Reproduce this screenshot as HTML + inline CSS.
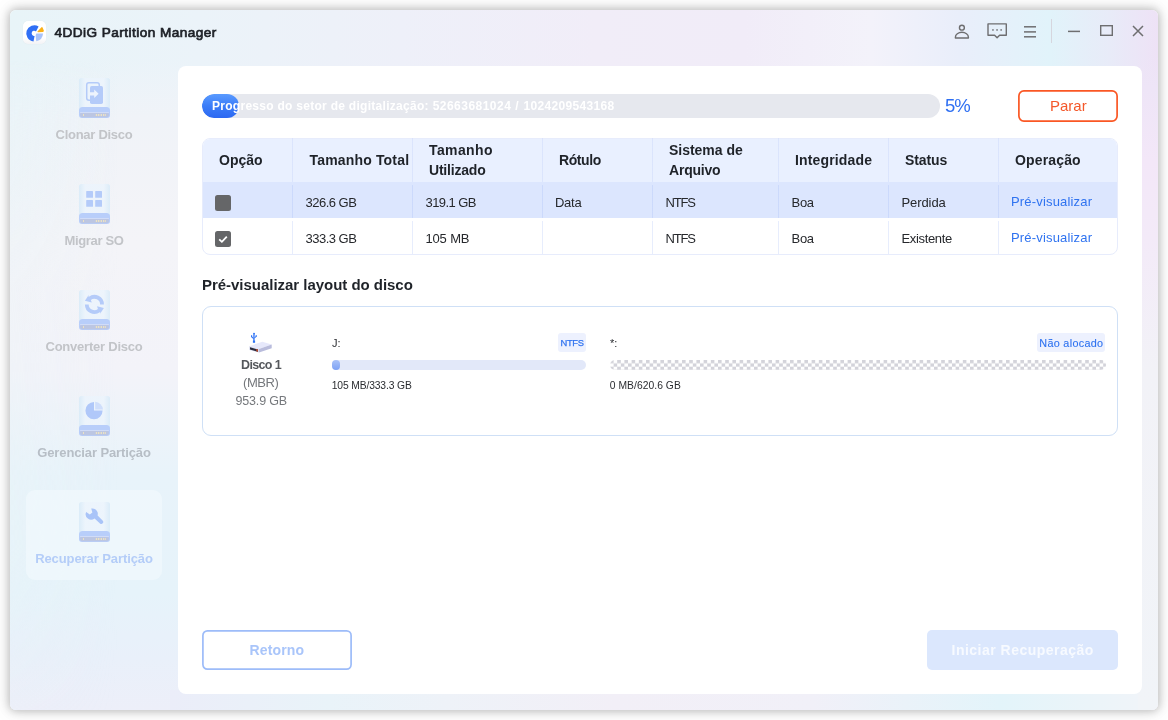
<!DOCTYPE html>
<html lang="pt">
<head>
<meta charset="utf-8">
<title>4DDiG Partition Manager</title>
<style>
*{box-sizing:border-box;margin:0;padding:0}
html,body{width:1168px;height:720px;overflow:hidden;background:#fff}
body{font-family:"Liberation Sans",sans-serif;position:relative;color:#1f2329;will-change:transform}
#win{position:absolute;left:10px;top:10px;width:1148px;height:700px;border-radius:6px;overflow:hidden;
 background:linear-gradient(90deg,#e8f4f8 0%,#ebf3f9 16.5%,#eef0f9 34%,#f1edf8 51%,#f1ecf8 64%,#f3f2fa 75%,#e9eefa 82.7%,#e1f3fa 90.6%,#e8ebf8 95.8%,#eee2f6 100%);
 box-shadow:0 0 10px 1px rgba(0,0,0,.26),0 0 20px 4px rgba(0,0,0,.05)}
#bgl{position:absolute;left:0;top:50px;width:176px;height:650px;
 background:linear-gradient(180deg,rgba(241,243,248,0) 0%,#f0f3f8 9%,#f4f4f8 28%,#f3f3f9 48%,#e8f3fa 64%,#e6f3fa 82%,#e9f0fa 92%,#edeff9 100%)}
#bgl2{position:absolute;left:0;top:50px;width:110px;height:650px;background:linear-gradient(90deg,rgba(232,244,248,.7),rgba(232,244,248,0));
 -webkit-mask-image:linear-gradient(180deg,transparent 0,#000 6%,rgba(0,0,0,.8) 16%,rgba(0,0,0,.35) 35%,rgba(0,0,0,.4) 55%,rgba(0,0,0,.5) 75%,rgba(0,0,0,.1) 100%);mask-image:linear-gradient(180deg,transparent 0,#000 6%,rgba(0,0,0,.8) 16%,rgba(0,0,0,.35) 35%,rgba(0,0,0,.4) 55%,rgba(0,0,0,.5) 75%,rgba(0,0,0,.1) 100%)}
#bgb{position:absolute;left:160px;top:680px;width:988px;height:20px;
 background:linear-gradient(90deg,#ebedf9 0%,#e9f3f9 16%,#eef2f8 28%,#f2eff7 45%,#f1f0f8 65%,#e3f4fa 84%,#ebf4f9 93%,#f1f4f9 100%)}
#bgr{position:absolute;left:1128px;top:46px;width:20px;height:654px;
 background:linear-gradient(180deg,rgba(237,228,247,0) 0%,#eee5f7 5%,#f3e7f8 16%,#f3eaf8 28%,#f2f2f7 48%,#f1f4f8 100%)}
#panel{position:absolute;left:178px;top:66px;width:964px;height:628px;background:#fff;border-radius:8px}
.t{position:absolute;white-space:nowrap;line-height:20px;height:20px}
.b{font-weight:bold}
svg{position:absolute;overflow:visible}
/* title */
#logo{position:absolute;left:23px;top:21px;width:23px;height:23px;border-radius:5px;background:linear-gradient(180deg,#fff 70%,#f3f3f5 100%);box-shadow:0 0 1px rgba(0,0,0,.10)}
/* sidebar */
.sb{position:absolute;left:14px;width:160px;text-align:center;font-weight:bold;font-size:13px;color:#c2c4c8;line-height:20px;height:20px;white-space:nowrap}
#sel{position:absolute;left:26px;top:490px;width:136px;height:90px;border-radius:9px;background:rgba(244,250,254,.6)}
/* table */
#tbl{position:absolute;left:202px;top:138px;width:916px;height:117px;border:1px solid #e7ecfc;border-radius:8px;overflow:hidden;background:#fff}
#thead{position:absolute;left:-1px;top:-1px;width:916px;height:44px;background:#e9f0ff}
#row1{position:absolute;left:-1px;top:43px;width:916px;height:36px;background:#dce6fe}
.vl{position:absolute;top:138px;width:1px;height:116px;background:linear-gradient(180deg,rgba(205,217,250,.5) 0,rgba(205,217,250,.5) 44px,transparent 44px,transparent 47px,rgba(190,207,250,.55) 47px,rgba(190,207,250,.55) 80px,transparent 80px,transparent 83px,rgba(215,225,251,.6) 83px,rgba(215,225,251,.6) 116px)}
.th{position:absolute;font-weight:bold;font-size:14px;color:#1f2329;line-height:20px;white-space:nowrap}
.td{position:absolute;font-size:13px;color:#26282c;line-height:20px;height:20px;white-space:nowrap}
.lnk{color:#2f73f0}
.cb{position:absolute;left:215px;width:16px;height:16px;border-radius:2.5px;background:#656668}
/* spacing */
#nao{letter-spacing:0.315px}
#p4{letter-spacing:0.333px}
#p2{letter-spacing:0.471px}
#p1{letter-spacing:0.280px}
#title{letter-spacing:0.454px}
#s1{letter-spacing:-0.282px}
#s2{letter-spacing:-0.325px}
#s3{letter-spacing:-0.228px}
#s4{letter-spacing:-0.113px}
#s5{letter-spacing:-0.085px}
#pct{letter-spacing:-1.123px}
#parar{letter-spacing:0.000px}
#h1{letter-spacing:0.006px}
#h2{letter-spacing:0.170px}
#h3a{letter-spacing:0.387px}
#h3b{letter-spacing:-0.205px}
#h4{letter-spacing:-0.421px}
#h5a{letter-spacing:-0.023px}
#h5b{letter-spacing:-0.214px}
#h6{letter-spacing:0.149px}
#h7{letter-spacing:-0.115px}
#h8{letter-spacing:0.151px}
#r1c2{letter-spacing:-0.517px}
#r1c3{letter-spacing:-0.580px}
#r1c4{letter-spacing:-0.267px}
#r1c5{letter-spacing:-1.214px}
#r1c6{letter-spacing:-0.280px}
#r1c7{letter-spacing:-0.087px}
#r1c8{letter-spacing:0.175px}
#r2c2{letter-spacing:-0.517px}
#r2c3{letter-spacing:-0.169px}
#r2c5{letter-spacing:-1.200px}
#r2c6{letter-spacing:-0.280px}
#r2c7{letter-spacing:-0.343px}
#r2c8{letter-spacing:0.175px}
#pvh{letter-spacing:-0.031px}
#d1{letter-spacing:-0.638px}
#d2{letter-spacing:-0.449px}
#d3{letter-spacing:-0.166px}
#j2{letter-spacing:-0.124px}
#u2{letter-spacing:0.046px}
#ntfs{letter-spacing:-0.346px}
#ret{letter-spacing:0.133px}
#ini{letter-spacing:0.491px}
</style>
</head>
<body>
<div id="win"><div id="bgl"></div><div id="bgl2"></div><div id="bgb"></div><div id="bgr"></div></div>
<div id="logo"></div>
<div id="title" class="t" style="left:54.5px;top:22.8px;font-size:13.6px;color:#1d2026;-webkit-text-stroke:.7px #1d2026">4DDiG Partition Manager</div>

<div id="sel"></div>
<div id="s1" class="sb" style="top:124.8px">Clonar Disco</div>
<div id="s2" class="sb" style="top:230.8px">Migrar SO</div>
<div id="s3" class="sb" style="top:336.8px">Converter Disco</div>
<div id="s4" class="sb" style="top:442.8px;color:#b7bec6">Gerenciar Partição</div>
<div id="s5" class="sb" style="top:548.8px;color:#b4cdf8">Recuperar Partição</div>

<svg style="left:79px;top:78px" width="31" height="40" viewBox="0 0 31 40">
<defs><linearGradient id="gb78" x1="0" x2="1" y1="0" y2="0"><stop offset="0" stop-color="#d9ebf8"/><stop offset=".2" stop-color="#ecf4fc"/><stop offset=".8" stop-color="#ecf4fc"/><stop offset="1" stop-color="#d9ebf8"/></linearGradient></defs>
<path d="M2.5 0 H28.5 Q31 0 31 2.5 V34 H0 V2.5 Q0 0 2.5 0Z" fill="url(#gb78)" opacity=".9"/>
<path d="M3.5 29 H27.5 Q31 29 31 32.5 V37 Q31 40 28 40 H3 Q0 40 0 37 V32.5 Q0 29 3.5 29Z" fill="#b8cefa"/>
<rect x="1" y="34.3" width="29" height="5" rx="2.3" fill="#bcc6e2"/>
<rect x="1" y="34" width="29" height="1" rx=".5" fill="#d3defa" opacity=".9"/>
<g fill="#ebe2c4"><rect x="4" y="36" width="1" height="2"/><rect x="16.8" y="36" width="1.4" height="2"/><rect x="19" y="36" width="1.4" height="2"/><rect x="21.6" y="36" width="1.4" height="2"/><rect x="24" y="36" width="1.2" height="2"/><rect x="25.8" y="36" width="1" height="2"/></g>
<rect x="7.7" y="4.7" width="12.6" height="17.6" rx="2.2" fill="none" stroke="#b4cbf9" stroke-width="1.5"/>
<rect x="11" y="8" width="13" height="18" rx="1.8" fill="#b4cbf9"/>
<path d="M10 14.2 H15.2 V11.6 L19.6 15.8 L15.2 20 V17.4 H10Z" fill="#eef4fd"/>
</svg><svg style="left:79px;top:184px" width="31" height="40" viewBox="0 0 31 40">
<defs><linearGradient id="gb184" x1="0" x2="1" y1="0" y2="0"><stop offset="0" stop-color="#d9ebf8"/><stop offset=".2" stop-color="#ecf4fc"/><stop offset=".8" stop-color="#ecf4fc"/><stop offset="1" stop-color="#d9ebf8"/></linearGradient></defs>
<path d="M2.5 0 H28.5 Q31 0 31 2.5 V34 H0 V2.5 Q0 0 2.5 0Z" fill="url(#gb184)" opacity=".9"/>
<path d="M3.5 29 H27.5 Q31 29 31 32.5 V37 Q31 40 28 40 H3 Q0 40 0 37 V32.5 Q0 29 3.5 29Z" fill="#b8cefa"/>
<rect x="1" y="34.3" width="29" height="5" rx="2.3" fill="#bcc6e2"/>
<rect x="1" y="34" width="29" height="1" rx=".5" fill="#d3defa" opacity=".9"/>
<g fill="#ebe2c4"><rect x="4" y="36" width="1" height="2"/><rect x="16.8" y="36" width="1.4" height="2"/><rect x="19" y="36" width="1.4" height="2"/><rect x="21.6" y="36" width="1.4" height="2"/><rect x="24" y="36" width="1.2" height="2"/><rect x="25.8" y="36" width="1" height="2"/></g>
<g fill="#b4cbf9"><rect x="7.2" y="7" width="6.8" height="6.8" rx=".6"/><rect x="16.2" y="7" width="6.8" height="6.8" rx=".6"/><rect x="7.2" y="16" width="6.8" height="6.8" rx=".6"/><rect x="16.2" y="16" width="6.8" height="6.8" rx=".6"/></g>
</svg><svg style="left:79px;top:290px" width="31" height="40" viewBox="0 0 31 40">
<defs><linearGradient id="gb290" x1="0" x2="1" y1="0" y2="0"><stop offset="0" stop-color="#d9ebf8"/><stop offset=".2" stop-color="#ecf4fc"/><stop offset=".8" stop-color="#ecf4fc"/><stop offset="1" stop-color="#d9ebf8"/></linearGradient></defs>
<path d="M2.5 0 H28.5 Q31 0 31 2.5 V34 H0 V2.5 Q0 0 2.5 0Z" fill="url(#gb290)" opacity=".9"/>
<path d="M3.5 29 H27.5 Q31 29 31 32.5 V37 Q31 40 28 40 H3 Q0 40 0 37 V32.5 Q0 29 3.5 29Z" fill="#b8cefa"/>
<rect x="1" y="34.3" width="29" height="5" rx="2.3" fill="#bcc6e2"/>
<rect x="1" y="34" width="29" height="1" rx=".5" fill="#d3defa" opacity=".9"/>
<g fill="#ebe2c4"><rect x="4" y="36" width="1" height="2"/><rect x="16.8" y="36" width="1.4" height="2"/><rect x="19" y="36" width="1.4" height="2"/><rect x="21.6" y="36" width="1.4" height="2"/><rect x="24" y="36" width="1.2" height="2"/><rect x="25.8" y="36" width="1" height="2"/></g>
<g fill="#b4cbf9"><path d="M24.9 14.4 A9.5 9.5 0 0 0 9.55 6.91 L9.7 5 L5.9 10.7 L12.75 12.6 L11.89 9.91 A5.7 5.7 0 0 1 21.1 14.4 Z"/><path d="M24.9 14.4 A9.5 9.5 0 0 0 9.55 6.91 L9.7 5 L5.9 10.7 L12.75 12.6 L11.89 9.91 A5.7 5.7 0 0 1 21.1 14.4 Z" transform="rotate(180 15.4 14.4)"/></g>
</svg><svg style="left:79px;top:396px" width="31" height="40" viewBox="0 0 31 40">
<defs><linearGradient id="gb396" x1="0" x2="1" y1="0" y2="0"><stop offset="0" stop-color="#d9ebf8"/><stop offset=".2" stop-color="#ecf4fc"/><stop offset=".8" stop-color="#ecf4fc"/><stop offset="1" stop-color="#d9ebf8"/></linearGradient></defs>
<path d="M2.5 0 H28.5 Q31 0 31 2.5 V34 H0 V2.5 Q0 0 2.5 0Z" fill="url(#gb396)" opacity=".9"/>
<path d="M3.5 29 H27.5 Q31 29 31 32.5 V37 Q31 40 28 40 H3 Q0 40 0 37 V32.5 Q0 29 3.5 29Z" fill="#b8cefa"/>
<rect x="1" y="34.3" width="29" height="5" rx="2.3" fill="#bcc6e2"/>
<rect x="1" y="34" width="29" height="1" rx=".5" fill="#d3defa" opacity=".9"/>
<g fill="#ebe2c4"><rect x="4" y="36" width="1" height="2"/><rect x="16.8" y="36" width="1.4" height="2"/><rect x="19" y="36" width="1.4" height="2"/><rect x="21.6" y="36" width="1.4" height="2"/><rect x="24" y="36" width="1.2" height="2"/><rect x="25.8" y="36" width="1" height="2"/></g>
<path d="M15 6 A8.6 8.6 0 1 0 23.6 14.6 H15Z" fill="#b0c8f9"/><path d="M16.2 5.8 A8.6 8.6 0 0 1 24 13.4 H16.2Z" fill="#cfdefb"/>
</svg><svg style="left:79px;top:502px" width="31" height="40" viewBox="0 0 31 40">
<defs><linearGradient id="gb502" x1="0" x2="1" y1="0" y2="0"><stop offset="0" stop-color="#d9ebf8"/><stop offset=".2" stop-color="#ecf4fc"/><stop offset=".8" stop-color="#ecf4fc"/><stop offset="1" stop-color="#d9ebf8"/></linearGradient></defs>
<path d="M2.5 0 H28.5 Q31 0 31 2.5 V34 H0 V2.5 Q0 0 2.5 0Z" fill="url(#gb502)" opacity=".9"/>
<path d="M3.5 29 H27.5 Q31 29 31 32.5 V37 Q31 40 28 40 H3 Q0 40 0 37 V32.5 Q0 29 3.5 29Z" fill="#b8cefa"/>
<rect x="1" y="34.3" width="29" height="5" rx="2.3" fill="#bcc6e2"/>
<rect x="1" y="34" width="29" height="1" rx=".5" fill="#d3defa" opacity=".9"/>
<g fill="#ebe2c4"><rect x="4" y="36" width="1" height="2"/><rect x="16.8" y="36" width="1.4" height="2"/><rect x="19" y="36" width="1.4" height="2"/><rect x="21.6" y="36" width="1.4" height="2"/><rect x="24" y="36" width="1.2" height="2"/><rect x="25.8" y="36" width="1" height="2"/></g>
<path d="M12.2 6.6 A5.4 5.4 0 0 1 18.6 13.4 L23.6 18.6 A1.9 1.9 0 0 1 21 21.4 L15.6 16.4 A5.4 5.4 0 0 1 7.2 10 L10.8 12.6 L13.4 10.4Z" fill="#a9c4f8"/>
</svg>
<svg style="left:23px;top:21.5px" width="23" height="23" viewBox="0 0 23 23">
<path d="M15.6 4.4 A8.2 8.2 0 1 0 10.5 19.6 L11.6 13.9 A2.6 2.6 0 1 1 13 9.4Z" fill="#2f6ff5"/>
<path d="M14.4 9.5 L18.5 5.2 Q19.2 4.8 19.6 5.6 L20.9 8.8 Q20.9 9.9 19.9 9.9 L14.8 10.2Z" fill="#fbb116"/>
<path d="M13.3 11.4 H20 A8.4 8.4 0 0 1 13.3 19.2 L12.6 13.6Z" fill="#a8c3fa"/>
</svg>
<svg style="left:950px;top:18px" width="200" height="28" viewBox="950 18 200 28" fill="none" stroke="#6e6e70" stroke-width="1.4">
<circle cx="961.9" cy="27.7" r="2.45"/>
<path d="M955.4 38 V37.2 A6.5 4.9 0 0 1 968.4 37.2 V38Z" stroke-linejoin="round"/>
<path d="M988 23.9 H1006.3 V35.2 H999.6 L997.1 37.8 L994.6 35.2 H988Z" stroke-linejoin="round"/>
<g stroke="none" fill="#6e6e70"><rect x="992.2" y="29.2" width="1.5" height="1.5"/><rect x="996.3" y="29.2" width="1.5" height="1.5"/><rect x="1000.4" y="29.2" width="1.5" height="1.5"/></g>
<g stroke-width="1.5"><path d="M1024 26.8 H1036"/><path d="M1024 31.9 H1036"/><path d="M1024 36.8 H1036"/></g>
<path d="M1051.5 19 V43" stroke="#d6d6de" stroke-width="1"/>
<path d="M1068 31.4 H1080" stroke-width="1.5"/>
<rect x="1100.7" y="25.7" width="11.6" height="9.6" stroke-width="1.4"/>
<path d="M1133 26 L1143 36 M1143 26 L1133 36" stroke-width="1.5"/>
</svg>
<div id="panel"></div>

<!-- progress -->
<div style="position:absolute;left:202px;top:94px;width:738px;height:24px;border-radius:12px;background:#e6e8ee;overflow:hidden">
  <div style="position:absolute;left:0;top:0;width:37px;height:24px;border-radius:12px;background:linear-gradient(180deg,#5a9bff 0%,#3b7df8 50%,#2c68f2 100%)"></div>
</div>
<div id="p1" class="t b" style="left:212px;top:95.5px;font-size:12px;color:#fff">Progresso do setor de digitalização:</div><div id="p2" class="t b" style="left:432.7px;top:95.5px;font-size:12px;color:#fff">52663681024</div><div id="p3" class="t b" style="left:515.3px;top:95.5px;font-size:12px;color:#fff">/</div><div id="p4" class="t b" style="left:523.5px;top:95.5px;font-size:12px;color:#fff">1024209543168</div>
<div id="pct" class="t" style="left:945px;top:95.5px;font-size:18.5px;color:#2e6ff2">5%</div>
<svg style="left:1018px;top:90px" width="100" height="32" viewBox="0 0 100 32"><rect x=".9" y=".9" width="98.2" height="30.2" rx="5" fill="#fff" stroke="#fa5724" stroke-width="1.7"/></svg>
<div id="parar" class="t" style="left:1050px;top:96px;font-size:15px;color:#f4582a">Parar</div>

<!-- table -->
<div id="tbl"><div id="thead"></div><div id="row1"></div></div>
<div class="vl" style="left:292px"></div>
<div class="vl" style="left:412px"></div>
<div class="vl" style="left:542px"></div>
<div class="vl" style="left:652px"></div>
<div class="vl" style="left:778px"></div>
<div class="vl" style="left:888px"></div>
<div class="vl" style="left:998px"></div>

<div id="h1" class="th" style="left:219px;top:150.2px">Opção</div>
<div id="h2" class="th" style="left:309.5px;top:150.2px">Tamanho Total</div>
<div id="h3a" class="th" style="left:429px;top:140.2px">Tamanho</div>
<div id="h3b" class="th" style="left:429px;top:160.2px">Utilizado</div>
<div id="h4" class="th" style="left:559px;top:150.2px">Rótulo</div>
<div id="h5a" class="th" style="left:669px;top:140.2px">Sistema de</div>
<div id="h5b" class="th" style="left:669px;top:160.2px">Arquivo</div>
<div id="h6" class="th" style="left:795px;top:150.2px">Integridade</div>
<div id="h7" class="th" style="left:905px;top:150.2px">Status</div>
<div id="h8" class="th" style="left:1015px;top:150.2px">Operação</div>

<div class="cb" style="top:195px"></div>
<div class="cb" style="top:231px"></div>
<svg style="left:215px;top:231px" width="16" height="16" viewBox="0 0 16 16"><path d="M4.2 8.3 L6.9 10.8 L11.8 5.6" fill="none" stroke="#fff" stroke-width="1.8"/></svg>

<div id="r1c2" class="td" style="left:305.5px;top:192.5px">326.6 GB</div>
<div id="r1c3" class="td" style="left:425.5px;top:192.5px">319.1 GB</div>
<div id="r1c4" class="td" style="left:555px;top:192.5px">Data</div>
<div id="r1c5" class="td" style="left:665.5px;top:192.5px">NTFS</div>
<div id="r1c6" class="td" style="left:791.5px;top:192.5px">Boa</div>
<div id="r1c7" class="td" style="left:901.5px;top:192.5px">Perdida</div>
<div id="r1c8" class="td lnk" style="left:1011px;top:191.5px">Pré-visualizar</div>

<div id="r2c2" class="td" style="left:305.5px;top:228.5px">333.3 GB</div>
<div id="r2c3" class="td" style="left:425.5px;top:228.5px">105 MB</div>
<div id="r2c5" class="td" style="left:665.5px;top:228.5px">NTFS</div>
<div id="r2c6" class="td" style="left:791.5px;top:228.5px">Boa</div>
<div id="r2c7" class="td" style="left:901.5px;top:228.5px">Existente</div>
<div id="r2c8" class="td lnk" style="left:1011px;top:227.5px">Pré-visualizar</div>

<!-- preview -->
<div id="pvh" class="t b" style="left:202px;top:274.5px;font-size:15px;color:#1f2329">Pré-visualizar layout do disco</div>
<div style="position:absolute;left:202px;top:306px;width:916px;height:130px;border:1px solid #cfe0f6;border-radius:9px;background:#fff"></div>

<svg style="left:246px;top:330px" width="30" height="26" viewBox="246 330 30 26">
<path d="M249.2 346.3 L262.3 341.7 L271.7 344.6 L259 348.9Z" fill="#e6e8fb"/>
<path d="M259 348.9 L271.7 344.6 V348.3 L259 352.6Z" fill="#b9bcdc"/>
<path d="M249.2 346.3 L259 348.9 V352.6 L249.4 349.9Z" fill="#d9dcf0"/>
<path d="M250 347.3 L258 349.5 V351.8 L250 349.5Z" fill="#2b2c3c"/>
<path d="M256.2 349 L258 349.5 V351.8 L256.2 351.3Z" fill="#b5482c"/>
<g fill="#2f73f5"><rect x="253.3" y="333" width="1.3" height="8"/><rect x="252.9" y="340.6" width="2.2" height="2.2"/><path d="M253.3 333.4 L254 332.6 L255 333.8 L254.6 334.6Z"/><path d="M251 335.2 H252.2 V336.4 L253.6 338 V339.2 L251 336.9Z"/><path d="M255.6 335.2 H256.9 V336.4 L254.4 338.6 V337.4 L255.6 336.3Z"/></g>
</svg>
<div id="d1" class="t b" style="left:241px;top:355px;font-size:12.5px;color:#55585c">Disco 1</div>
<div id="d2" class="t" style="left:243px;top:372.5px;font-size:13px;color:#75787c">(MBR)</div>
<div id="d3" class="t" style="left:235.5px;top:390.5px;font-size:12.5px;color:#75787c">953.9 GB</div>

<div id="j1" class="t" style="left:332px;top:333px;font-size:11px;color:#2a2c30">J:</div>
<div style="position:absolute;left:558px;top:333px;width:28px;height:19px;border-radius:3px;background:#edf1fe"></div>
<div id="ntfs" class="t" style="left:560.5px;top:333px;font-size:9.4px;color:#2f73f0;-webkit-text-stroke:.25px #2f73f0">NTFS</div>
<div style="position:absolute;left:332px;top:360px;width:254px;height:10px;border-radius:5px;background:#e2e8f9"></div>
<div style="position:absolute;left:332px;top:360px;width:8px;height:10px;border-radius:5px;background:linear-gradient(180deg,#a9c2f8,#7da2f5)"></div>
<div id="j2" class="t" style="left:331.7px;top:375.8px;font-size:10.3px;color:#2a2c30">105 MB/333.3 GB</div>

<div id="u1" class="t" style="left:610px;top:333px;font-size:11px;color:#2a2c30">*:</div>
<div style="position:absolute;left:1037px;top:333px;width:68px;height:19px;border-radius:3px;background:#edf1fe"></div>
<div id="nao" class="t" style="left:1039.3px;top:332.5px;font-size:10.8px;color:#2f73f0;-webkit-text-stroke:.12px #2f73f0">Não alocado</div>
<svg style="left:610px;top:360px" width="496" height="10" viewBox="0 0 496 10"><defs><pattern id="chk" width="7.2" height="6.667" patternUnits="userSpaceOnUse"><rect x="0" y="0" width="3.6" height="3.333" fill="#d3d3da"/><rect x="3.6" y="3.333" width="3.6" height="3.334" fill="#d3d3da"/></pattern><clipPath id="chc"><rect x="0" y="0" width="496" height="10" rx="5"/></clipPath></defs><rect x="0" y="0" width="496" height="10" fill="url(#chk)" clip-path="url(#chc)"/></svg>
<div id="u2" class="t" style="left:609.8px;top:375.8px;font-size:10.3px;color:#2a2c30">0 MB/620.6 GB</div>

<!-- bottom buttons -->
<svg style="left:202px;top:630px" width="150" height="40" viewBox="0 0 150 40"><rect x=".9" y=".9" width="148.2" height="38.2" rx="4.5" fill="#fff" stroke="#9dbcf9" stroke-width="1.7"/></svg>
<div id="ret" class="t b" style="left:249.5px;top:640px;font-size:14px;color:#a9c5fa">Retorno</div>
<div style="position:absolute;left:927px;top:630px;width:191px;height:40px;border-radius:5px;background:#dbe7fd"></div>
<div id="ini" class="t b" style="left:951.5px;top:640px;font-size:14px;color:#f7faff">Iniciar Recuperação</div>

</body>
</html>
